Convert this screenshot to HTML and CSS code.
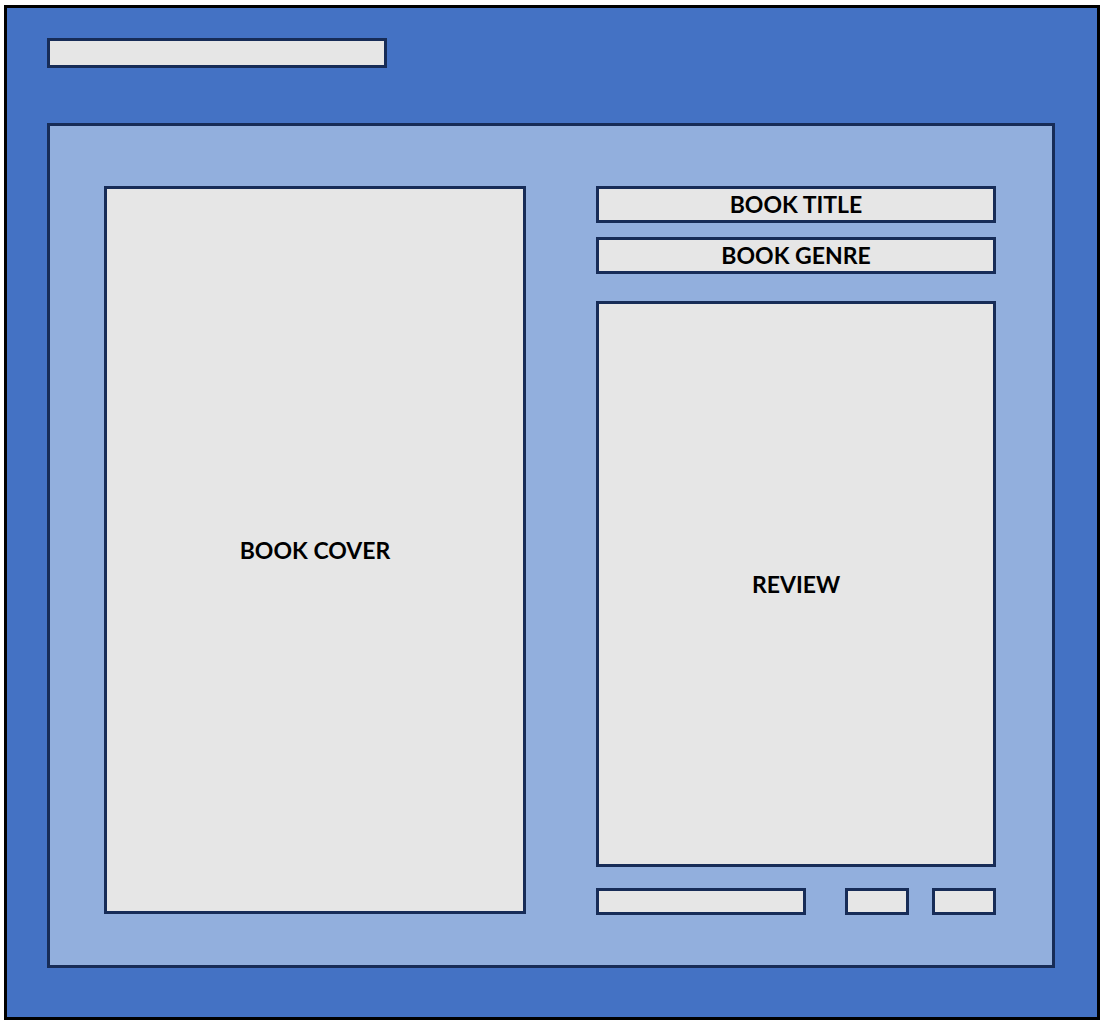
FILE: index.html
```html
<!DOCTYPE html>
<html lang="en">

<head>
    <meta charset="UTF-8">
    <meta name="viewport" content="width=device-width, initial-scale=1.0">
    <title>Book Review</title>
    <link rel="stylesheet" href="styles.css">
</head>

<body>

    <div id="frame">
        <div class="searchbar"></div>

        <div id="panel">
            <div class="box cover">BOOK COVER</div>

            <div id="details">
                <div class="box field">BOOK TITLE</div>
                <div class="box field genre">BOOK GENRE</div>
                <div class="box review">REVIEW</div>

                <div id="actions">
                    <div class="box input"></div>
                    <div class="box small first"></div>
                    <div class="box small"></div>
                </div>
            </div>
        </div>
    </div>

</body>

</html>
```

FILE: styles.css
```css
* {
    padding: 0;
    margin: 0;
    box-sizing: border-box;
}

body {
    background-color: white;
    font-family: Lato, "Open Sans", sans-serif;
}

#frame {
    margin: 5px 0 0 4px;
    width: 1096px;
    height: 1015px;
    border: 3px solid black;
    background-color: #4472c4;
    padding: 30px 40px;
}

.searchbar {
    width: 340px;
    height: 30px;
    background-color: #e6e6e6;
    border: 3px solid #172c57;
}

#panel {
    margin-top: 55px;
    width: 1008px;
    height: 845px;
    background-color: #92afdd;
    border: 3px solid #172c57;
    padding: 60px 0 0 54px;
    display: flex;
    gap: 70px;
    align-items: flex-start;
}

.box {
    background-color: #e6e6e6;
    border: 3px solid #172c57;
    display: flex;
    justify-content: center;
    align-items: center;
    font-weight: bold;
    font-size: 23px;
    line-height: 1;
    color: black;
}

.cover {
    width: 422px;
    height: 728px;
}

#details {
    width: 400px;
    display: flex;
    flex-direction: column;
}

.field {
    height: 37px;
}

.genre {
    margin-top: 14px;
}

.review {
    margin-top: 27px;
    height: 566px;
}

#actions {
    margin-top: 21px;
    display: flex;
}

#actions .box {
    height: 27px;
}

.input {
    width: 210px;
}

.small {
    width: 64px;
    margin-left: 23px;
}

.small.first {
    margin-left: 39px;
}
```
